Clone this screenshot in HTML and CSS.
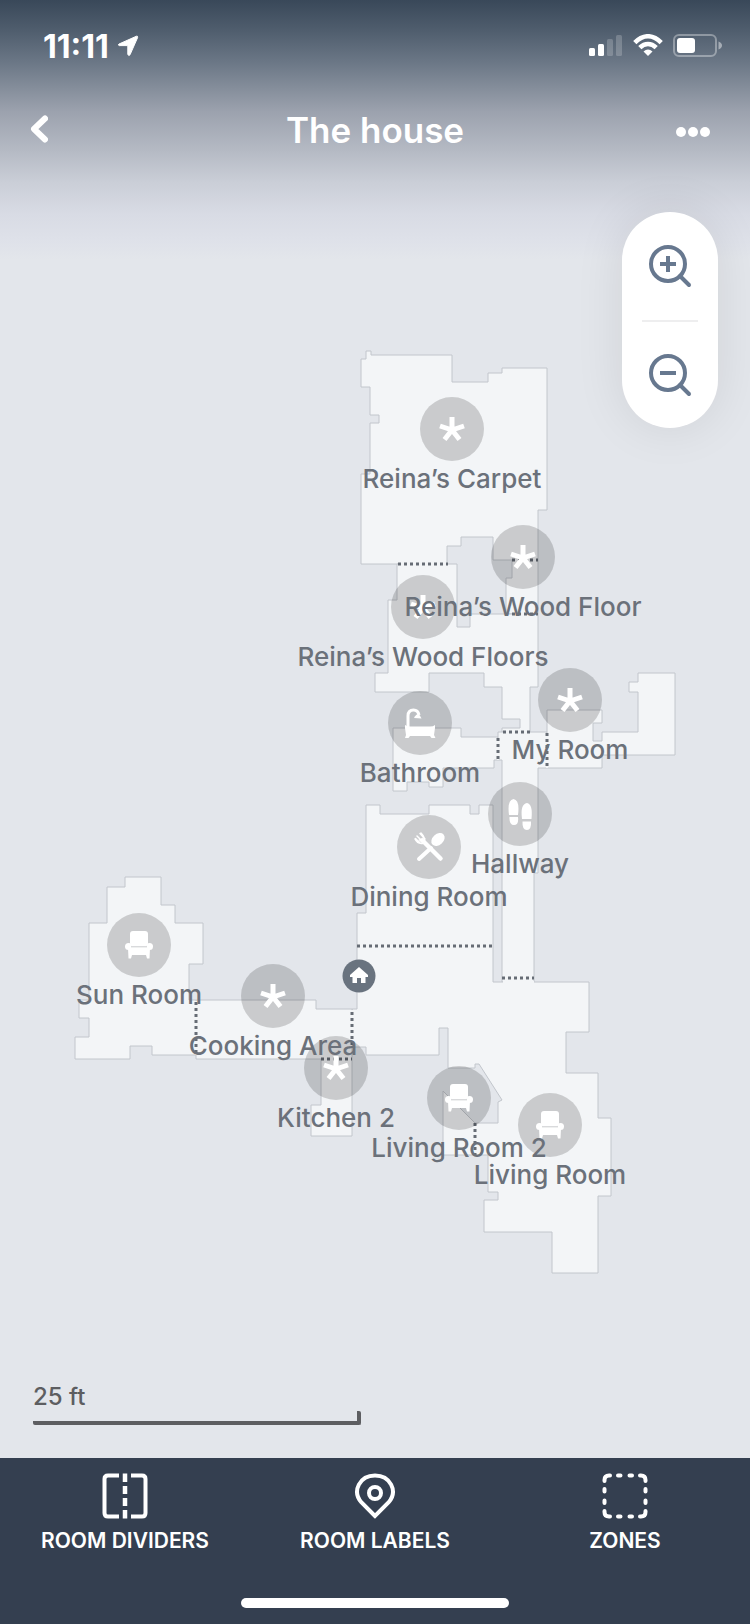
FILE: index.html
```html
<!DOCTYPE html>
<html lang="en">
<head>
    <meta charset="UTF-8">
    <meta name="viewport" content="width=device-width, initial-scale=1.0">
    <title>The house</title>
    <link rel="stylesheet" href="styles.css">
</head>
<body>
    <div class="screen">
        <header class="header">
            <div class="status-bar">
                <div class="status-left">
                    <span class="time">11:11</span>
                    <svg class="location" width="22" height="22" viewBox="0 0 22 22">
                        <path d="M19.500 1.200 L2 9 Q0.500 10 2.200 10.600 H10.800 V19.300 Q11.600 21.500 13 19.800 L20.600 2.600 Q21 0.800 19.500 1.200Z" fill="#fff" stroke="#fff"/>
                    </svg>
                </div>
                <div class="status-right">
                    <svg width="34" height="24" viewBox="0 0 34 24" fill="#fff">
                        <rect x="0" y="14" width="6" height="8" rx="1.500"/>
                        <rect x="9" y="10" width="6" height="12" rx="1.500"/>
                        <rect x="18" y="5" width="6" height="17" rx="1.500" opacity=".2"/>
                        <rect x="27" y="1" width="6" height="21" rx="1.500" opacity=".2"/>
                    </svg>
                    <svg width="30" height="24" viewBox="0 0 30 24" fill="none" stroke="#fff" stroke-width="4.500">
                        <path d="M1.800 8.600 Q8 2.200 15 2.200 T28.200 8.600"/>
                        <path d="M6.800 13.600 Q10.500 9.900 15 9.900 T23.200 13.600"/>
                        <path d="M10.500 17.500 Q15 13.500 19.500 17.500 L15 22Z" fill="#fff" stroke="none"/>
                    </svg>
                    <svg width="50" height="24" viewBox="0 0 50 24">
                        <rect x="1" y="1" width="42" height="21" rx="5" fill="none" stroke="#fff" stroke-opacity=".35" stroke-width="2"/>
                        <rect x="4" y="4" width="18" height="15" rx="3" fill="#fff"/>
                        <path d="M45.500 7.500 Q49 9 49 11.500 T45.500 15.500Z" fill="#fff" fill-opacity=".45"/>
                    </svg>
                </div>
            </div>
            <div class="nav">
                <button class="nav-btn" aria-label="Back">
                    <svg width="20" height="30" viewBox="0 0 20 30">
                        <path d="M17 3.500 L6 14 L17 24.500" fill="none" stroke="#fff" stroke-width="6" stroke-linecap="round" stroke-linejoin="round"/>
                    </svg>
                </button>
                <h1>The house</h1>
                <button class="nav-btn" aria-label="More options">
                    <svg width="34" height="30" viewBox="0 0 34 30" fill="#fff">
                        <circle cx="5" cy="17" r="5"/>
                        <circle cx="17" cy="17" r="5"/>
                        <circle cx="29" cy="17" r="5"/>
                    </svg>
                </button>
            </div>
        </header>

        <div class="zoom">
            <button aria-label="Zoom in">
                <svg width="44" height="44" viewBox="0 0 44 44" fill="none" stroke="#67788f" stroke-width="4">
                    <circle cx="20" cy="20" r="17"/>
                    <path d="M32 32 L41 41" stroke-linecap="round"/>
                    <path d="M12 20 H28 M20 12 V28"/>
                </svg>
            </button>
            <button aria-label="Zoom out">
                <svg width="44" height="44" viewBox="0 0 44 44" fill="none" stroke="#67788f" stroke-width="4">
                    <circle cx="20" cy="20" r="17"/>
                    <path d="M32 32 L41 41" stroke-linecap="round"/>
                    <path d="M12 20 H28"/>
                </svg>
            </button>
        </div>

        <main class="map">
            <svg class="floorplan" viewBox="0 260 750 1120">
                <defs>
                    <g id="star" stroke="#fff" stroke-width="5">
                        <path d="M0 1 V-12 M0 1 L-12 -3 M0 1 L12 -3 M0 1 L-7.500 10.500 M0 1 L7.500 10.500"/>
                    </g>
                    <g id="chair" fill="#fff">
                        <rect x="-9" y="-14" width="18" height="15" rx="3"/>
                        <path d="M-10 2 H10 V10 H-10Z"/>
                        <path d="M-7 2 V-1 H7 V2Z"/>
                        <circle cx="-10.500" cy="1.500" r="3.500"/>
                        <circle cx="10.500" cy="1.500" r="3.500"/>
                        <path d="M-11 3 H-7 V10 L-8 13.500 H-10.500Z M11 3 H7 V10 L8 13.500 H10.500Z"/>
                        <path d="M-8 1.800 H8" stroke="#c9cbcd"/>
                    </g>
                    <g id="bath" fill="#fff">
                        <path d="M-12 4 V-7 Q-12 -13 -6.500 -13 Q-2 -13 -1 -8" fill="none" stroke="#fff" stroke-width="3"/>
                        <path d="M-6 -5 Q-4 -9 -1.500 -9 Q0 -8 1.500 -4.500Z"/>
                        <path d="M-15 2 Q-12 4 -8 3.500 H8 Q13 4 15 2 V5 L14 12 L15.500 15 H11.500 L10 13 H-10 L-11.500 15 H-15 L-14 12 L-15 5Z"/>
                    </g>
                    <g id="steps" fill="#fff">
                        <path d="M-11 1 Q-13 -14 -6.500 -15 Q0 -14 -2 1Z M-10.500 3 H-2 Q-1 11 -6 11 Q-11 11 -10.500 3Z"/>
                        <path d="M2 5 Q0 -10 7 -11 Q13 -10 11.500 5Z M2.500 7.500 H11 Q11.500 16 7 16 Q2 16 2.500 7.500Z"/>
                    </g>
                    <g id="cutlery" fill="none" stroke="#fff" stroke-linecap="round">
                        <path d="M-10 12 L2 1" stroke-width="4"/>
                        <ellipse cx="9" cy="-7.500" rx="7.500" ry="5.500" transform="rotate(-42 9 -7.500)" fill="#fff" stroke="none"/>
                        <path d="M-5 -5 L11.500 11.500" stroke-width="4.500"/>
                        <path d="M-14 -8 Q-11 -2 -5 -4 Q-3 -9 -8 -14 M-12 -11 L-6 -5 M-13.500 -8.500 L-9 -4 M-9 -13.500 L-4 -8" stroke-width="1.500"/>
                        <path d="M-10 -7 L-6 -9 L-3 -3 L-7 -4Z" fill="#fff" stroke-width="1"/>
                    </g>
                </defs>

                <g class="rooms">
                    <path d="M366 351H371V355H452V382H488V373H502V368H547V510H538V560H493V537H461V546H447V564H361V474H370V423H379V415H370V387H361V359H366Z"/>
                    <path d="M512 560H538V614H506V578H512Z"/>
                    <path d="M397 564H457V627H470V614H538V687H530V732H502V728H520V719H502V687H484V673H429V692H375V673H388V600H397Z"/>
                    <path d="M393 728H461V737H498V760H494V768H443V787H429V782H407V791H393Z"/>
                    <path d="M498 732H547V768H538V873H534V982H502V760H498Z"/>
                    <path d="M547 710H602V723H593V741H602V732H638V692H629V682H638V673H675V755H602V768H547Z"/>
                    <path d="M366 805H380V814H429V805H470V814H479V805H493V982H502H534H589V1032H566V1073H598V1118H611V1196H598V1273H552V1232H484V1200H498V1192H488V1155H475V1123H498V1102L502 1100L479 1064H475V1068H448V1028H439V1055H366V1047H352V1009H357V913H366Z"/>
                    <path d="M443 1091L475 1123V1155H443Z"/>
                    <path d="M196 1000H316V1009H352V1059H196Z"/>
                    <path d="M321 1059H352V1136H311V1105H321Z"/>
                    <path d="M125 877H161V905H175V923H203V964H189V1000H196V1055H152V1046H130V1059H75V1037H89V1018H79V1000H89V923H107V887H125Z"/>
                </g>

                <!-- openings between rooms hide the wall under the dots -->
                <g class="openings">
                    <path d="M398 564H447M512 560H538M512 614H538M503 732H530M498 738V760M547 733V768M503 982H534M196 1001V1055M352 1010V1047M321 1059H352M475 1124V1155"/>
                </g>
                <g class="dividers">
                    <path d="M398 564H448M512 560H538M512 614H538M503 732H530M498 738V761M547 733V768M357 946H493M502 978H534M196 1002V1055M352 1012V1047M321 1059H352M475 1123V1155"/>
                </g>

                <g class="dock" transform="translate(359 976)">
                    <circle r="16.500"/>
                    <path d="M0 -9 L9 -1 V1 H6.500 V7 H2 V2 H-2 V7 H-6.500 V1 H-9 V-1Z"/>
                </g>

                <g class="labels">
                    <g transform="translate(423 607)"><circle r="32"/><use href="#star"/><text y="59">Reina’s Wood Floors</text></g>
                    <g transform="translate(452 429)"><circle r="32"/><use href="#star"/><text y="59">Reina’s Carpet</text></g>
                    <g transform="translate(523 557)"><circle r="32"/><use href="#star"/><text y="59">Reina’s Wood Floor</text></g>
                    <g transform="translate(570 700)"><circle r="32"/><use href="#star"/><text y="59">My Room</text></g>
                    <g transform="translate(420 723)"><circle r="32"/><use href="#bath"/><text y="59">Bathroom</text></g>
                    <g transform="translate(520 814)"><circle r="32"/><use href="#steps"/><text y="59">Hallway</text></g>
                    <g transform="translate(429 847)"><circle r="32"/><use href="#cutlery"/><text y="59">Dining Room</text></g>
                    <g transform="translate(139 945)"><circle r="32"/><use href="#chair"/><text y="59">Sun Room</text></g>
                    <g transform="translate(336 1068)"><circle r="32"/><use href="#star"/><text y="59">Kitchen 2</text></g>
                    <g transform="translate(273 996)"><circle r="32"/><use href="#star"/><text y="59">Cooking Area</text></g>
                    <g transform="translate(550 1125)"><circle r="32"/><use href="#chair"/><text y="59">Living Room</text></g>
                    <g transform="translate(459 1098)"><circle r="32"/><use href="#chair"/><text y="59">Living Room 2</text></g>
                </g>
            </svg>

            <div class="scale">
                <span>25 ft</span>
                <div class="scale-line"></div>
            </div>
        </main>

        <nav class="toolbar">
            <div class="tools">
                <button class="tool">
                    <svg width="46" height="46" viewBox="0 0 46 46" fill="none" stroke="#fff" stroke-width="4">
                        <path d="M17 2.500 H6 Q2.500 2.500 2.500 6 V40 Q2.500 43.500 6 43.500 H17 M29 2.500 H40 Q43.500 2.500 43.500 6 V40 Q43.500 43.500 40 43.500 H29"/>
                        <path d="M23 0.500 V9 M23 13 V21 M23 25 V33 M23 37 V45.500" stroke-width="4.500"/>
                    </svg>
                    <span>ROOM DIVIDERS</span>
                </button>
                <button class="tool">
                    <svg width="46" height="46" viewBox="0 0 46 46" fill="none" stroke="#fff" stroke-width="4">
                        <path d="M23 43 L9.500 29.500 C-0.500 18 8 2.500 23 2.500 S46.500 18 36.500 29.500Z"/>
                        <circle cx="23" cy="20" r="6"/>
                    </svg>
                    <span>ROOM LABELS</span>
                </button>
                <button class="tool">
                    <svg width="46" height="46" viewBox="0 0 46 46" fill="none" stroke="#fff" stroke-width="4" stroke-linecap="round">
                        <path d="M2.500 8 V7 Q2.500 2.500 7 2.500 H8 M38 2.500 H39 Q43.500 2.500 43.500 7 V8 M43.500 38 V39 Q43.500 43.500 39 43.500 H38 M8 43.500 H7 Q2.500 43.500 2.500 39 V38"/>
                        <path d="M16 2.500 H18.500 M27.500 2.500 H30 M16 43.500 H18.500 M27.500 43.500 H30 M2.500 16 V18.500 M2.500 27.500 V30 M43.500 16 V18.500 M43.500 27.500 V30"/>
                    </svg>
                    <span>ZONES</span>
                </button>
            </div>
            <div class="home-indicator"></div>
        </nav>
    </div>
</body>
</html>
```
FILE: styles.css
```css
* {
    margin: 0;
    padding: 0;
    box-sizing: border-box;
}

body {
    font-family: Inter, "Liberation Sans", sans-serif;
    background: #e3e6eb;
}

button {
    border: none;
    background: none;
    font-family: inherit;
    color: inherit;
    cursor: pointer;
}

svg {
    display: block;
}

.screen {
    position: relative;
    display: flex;
    flex-direction: column;
    min-height: 100vh;
}

/* header */
.header {
    color: white;
    padding-bottom: 92px;
    background: linear-gradient(#394859 0%, #505e6e 12%, #6b7786 24%, #858e9b 34%, #9ca2ae 43%, #b5bac4 58%, #caced7 70%, #d8dbe4 82%, #dee1e9 92%, #e3e6eb 100%);
}

.status-bar {
    display: flex;
    justify-content: space-between;
    align-items: center;
    height: 92px;
    padding: 0 27px 0 43px;
}

.status-left {
    display: flex;
    align-items: center;
    gap: 8px;
}

.status-right {
    display: flex;
    align-items: center;
    gap: 10px;
}

.time {
    font-size: 32px;
    font-weight: 700;
}

.nav {
    display: flex;
    justify-content: space-between;
    align-items: center;
    height: 76px;
    padding: 0 28px;
}

.nav-btn {
    display: flex;
    width: 46px;
}

.nav h1 {
    font-size: 35px;
    line-height: 46px;
    font-weight: 600;
}

/* zoom buttons */
.zoom {
    position: absolute;
    top: 212px;
    right: 32px;
    width: 96px;
    background: white;
    border-radius: 48px;
    box-shadow: 0 0 50px rgba(0, 0, 0, 0.09);
}

.zoom button {
    display: flex;
    justify-content: center;
    align-items: center;
    width: 56px;
    height: 108px;
    margin: 0 auto;
}

.zoom button + button {
    border-top: 2px solid #eeeeef;
}

/* map */
.map {
    flex: 1;
    display: flex;
    flex-direction: column;
}

.floorplan {
    width: 100%;
}

.rooms path {
    fill: #f3f5f7;
    stroke: #c2c6cc;
    stroke-width: 1;
}

.openings path {
    stroke: #f3f5f7;
    stroke-width: 2;
}

.dividers path {
    stroke: #666c75;
    stroke-width: 3;
    stroke-dasharray: 3 3;
}

.labels circle {
    fill: rgba(0, 0, 0, 0.17);
}

.labels text {
    fill: #6b717a;
    font-size: 26px;
    font-weight: 500;
    text-anchor: middle;
}

.dock circle {
    fill: #69737f;
}

.dock path {
    fill: white;
}

.scale {
    width: 328px;
    margin: auto 0 33px 33px;
    color: #5d5e61;
    font-size: 24px;
    line-height: 28px;
    font-weight: 500;
}

.scale-line {
    height: 14px;
    border-right: 4px solid #5d5e61;
    border-bottom: 4px solid #5d5e61;
    border-radius: 2px;
}

/* bottom bar */
.toolbar {
    background: #343f50;
    color: white;
    padding: 15px 0 16px;
}

.tools {
    display: grid;
    grid-template-columns: 1fr 1fr 1fr;
}

.tool {
    display: flex;
    flex-direction: column;
    align-items: center;
    gap: 10px;
    font-size: 21px;
    line-height: 24px;
    font-weight: 600;
}

.home-indicator {
    width: 268px;
    height: 10px;
    margin: 45px auto 0;
    background: white;
    border-radius: 5px;
}
```
